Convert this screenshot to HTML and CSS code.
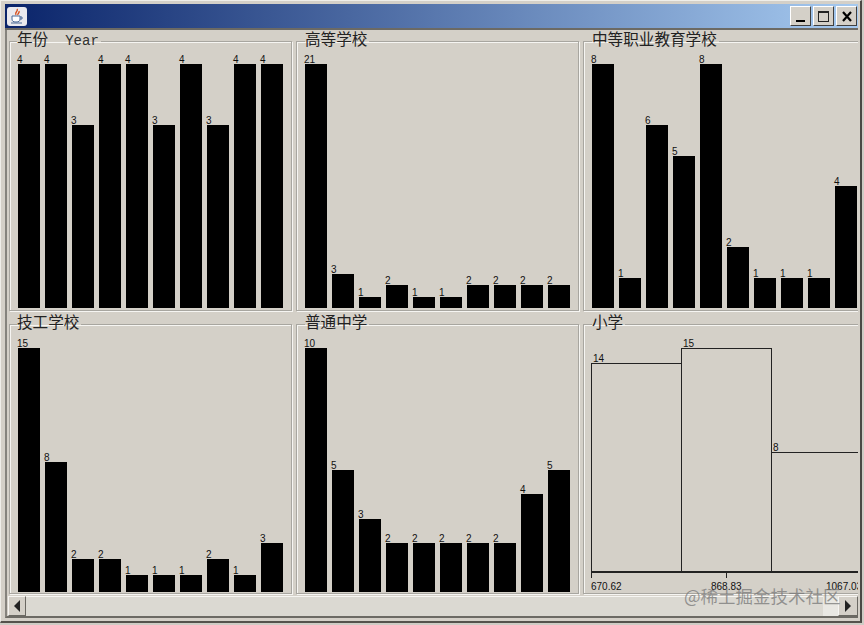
FILE: index.html
```html
<!DOCTYPE html>
<html lang="zh">
<head>
<meta charset="utf-8">
<title>Charts</title>
<link rel="stylesheet" href="styles.css">
</head>
<body>
<div class="window">
  <header class="titlebar">
    <div class="app-icon">
      <svg width="16" height="17" viewBox="0 0 16 17">
        <path d="M8 1c2 2-3 3-1 6M10 3c1 2-2 3-1 4" fill="none" stroke="#d8501c" stroke-width="1.4"/>
        <path d="M3 8h8v3c0 2-1 3-4 3s-4-1-4-3z" fill="#fff" stroke="#4a6a98"/>
        <path d="M11 9h2v2h-2" fill="none" stroke="#4a6a98"/>
        <path d="M2 15h11" stroke="#4a6a98"/>
      </svg>
    </div>
    <div class="win-buttons">
      <button class="win-btn"><span class="min-glyph"></span></button>
      <button class="win-btn"><span class="max-glyph"></span></button>
      <button class="win-btn close-btn">
        <svg width="12" height="11" viewBox="0 0 12 11"><path d="M2 1l8 9M10 1l-8 9" stroke="#000" stroke-width="2.2" fill="none"/></svg>
      </button>
    </div>
  </header>
  <div class="frame">
    <main class="viewport">
      <div class="grid">
        <fieldset class="panel">
          <legend>年份<span class="latin">Year</span></legend>
          <div class="bars">
            <div class="col"><span>4</span><i style="height:244px"></i></div>
            <div class="col"><span>4</span><i style="height:244px"></i></div>
            <div class="col"><span>3</span><i style="height:183px"></i></div>
            <div class="col"><span>4</span><i style="height:244px"></i></div>
            <div class="col"><span>4</span><i style="height:244px"></i></div>
            <div class="col"><span>3</span><i style="height:183px"></i></div>
            <div class="col"><span>4</span><i style="height:244px"></i></div>
            <div class="col"><span>3</span><i style="height:183px"></i></div>
            <div class="col"><span>4</span><i style="height:244px"></i></div>
            <div class="col"><span>4</span><i style="height:244px"></i></div>
          </div>
        </fieldset>
        <fieldset class="panel">
          <legend>高等学校</legend>
          <div class="bars">
            <div class="col"><span>21</span><i style="height:244px"></i></div>
            <div class="col"><span>3</span><i style="height:34px"></i></div>
            <div class="col"><span>1</span><i style="height:11px"></i></div>
            <div class="col"><span>2</span><i style="height:23px"></i></div>
            <div class="col"><span>1</span><i style="height:11px"></i></div>
            <div class="col"><span>1</span><i style="height:11px"></i></div>
            <div class="col"><span>2</span><i style="height:23px"></i></div>
            <div class="col"><span>2</span><i style="height:23px"></i></div>
            <div class="col"><span>2</span><i style="height:23px"></i></div>
            <div class="col"><span>2</span><i style="height:23px"></i></div>
          </div>
        </fieldset>
        <fieldset class="panel">
          <legend>中等职业教育学校</legend>
          <div class="bars">
            <div class="col"><span>8</span><i style="height:244px"></i></div>
            <div class="col"><span>1</span><i style="height:30px"></i></div>
            <div class="col"><span>6</span><i style="height:183px"></i></div>
            <div class="col"><span>5</span><i style="height:152px"></i></div>
            <div class="col"><span>8</span><i style="height:244px"></i></div>
            <div class="col"><span>2</span><i style="height:61px"></i></div>
            <div class="col"><span>1</span><i style="height:30px"></i></div>
            <div class="col"><span>1</span><i style="height:30px"></i></div>
            <div class="col"><span>1</span><i style="height:30px"></i></div>
            <div class="col"><span>4</span><i style="height:122px"></i></div>
          </div>
        </fieldset>
        <fieldset class="panel">
          <legend>技工学校</legend>
          <div class="bars">
            <div class="col"><span>15</span><i style="height:244px"></i></div>
            <div class="col"><span>8</span><i style="height:130px"></i></div>
            <div class="col"><span>2</span><i style="height:33px"></i></div>
            <div class="col"><span>2</span><i style="height:33px"></i></div>
            <div class="col"><span>1</span><i style="height:17px"></i></div>
            <div class="col"><span>1</span><i style="height:17px"></i></div>
            <div class="col"><span>1</span><i style="height:17px"></i></div>
            <div class="col"><span>2</span><i style="height:33px"></i></div>
            <div class="col"><span>1</span><i style="height:17px"></i></div>
            <div class="col"><span>3</span><i style="height:49px"></i></div>
          </div>
        </fieldset>
        <fieldset class="panel">
          <legend>普通中学</legend>
          <div class="bars">
            <div class="col"><span>10</span><i style="height:244px"></i></div>
            <div class="col"><span>5</span><i style="height:122px"></i></div>
            <div class="col"><span>3</span><i style="height:73px"></i></div>
            <div class="col"><span>2</span><i style="height:49px"></i></div>
            <div class="col"><span>2</span><i style="height:49px"></i></div>
            <div class="col"><span>2</span><i style="height:49px"></i></div>
            <div class="col"><span>2</span><i style="height:49px"></i></div>
            <div class="col"><span>2</span><i style="height:49px"></i></div>
            <div class="col"><span>4</span><i style="height:98px"></i></div>
            <div class="col"><span>5</span><i style="height:122px"></i></div>
          </div>
        </fieldset>
        <fieldset class="panel">
          <legend>小学</legend>
          <div class="histogram">
            <div class="hist-bars">
              <div class="hist-col"><span>14</span><i style="height:208px"></i></div>
              <div class="hist-col"><span>15</span><i style="height:223px"></i></div>
              <div class="hist-col"><span>8</span><i style="height:119px"></i></div>
            </div>
            <div class="axis">
              <div class="tick"><b></b><span>670.62</span></div>
              <div class="tick"><b></b><span>868.83</span></div>
              <div class="tick"><b></b><span>1067.03</span></div>
            </div>
          </div>
        </fieldset>
      </div>
    </main>
    <div class="scrollbar">
      <div class="sb-btn"><span class="arrow-left"></span></div>
      <div class="sb-track"></div>
      <div class="sb-thumb"></div>
      <div class="sb-btn"><span class="arrow-right"></span></div>
    </div>
  </div>
</div>
<div class="watermark">@稀土掘金技术社区</div>
</body>
</html>
```

FILE: styles.css
```css
html, body { margin: 0; padding: 0; }
body {
  width: 864px;
  height: 625px;
  overflow: hidden;
  position: relative;
  background: #cfccc5;
  font-family: "Liberation Sans", "Noto Sans CJK SC", sans-serif;
}
.window {
  box-sizing: border-box;
  width: 862px;
  height: 623px;
  padding: 3px 2px 3px 4px;
  background: #d4d0c8;
  border-top: 1px solid #efeee9;
  border-left: 1px solid #efeee9;
  border-right: 2px solid #4a4945;
  border-bottom: 2px solid #55524c;
  display: flex;
  flex-direction: column;
}
.titlebar {
  flex: none;
  box-sizing: border-box;
  height: 26px;
  background: linear-gradient(90deg, #0a246a 0%, #a6caf0 100%);
  display: flex;
  align-items: center;
  justify-content: space-between;
  padding: 0 1px 0 2px;
  border-bottom: 2px solid #6c6a64;
}
.app-icon {
  width: 20px;
  height: 19px;
  background: #e9e9ee;
  border-radius: 3px;
  display: flex;
  align-items: center;
  justify-content: center;
}
.win-buttons { display: flex; gap: 2px; }
.win-btn {
  box-sizing: border-box;
  width: 21px;
  height: 20px;
  padding: 0;
  background: #d4d0c8;
  border: 1px solid;
  border-color: #fff #404040 #404040 #fff;
  display: flex;
  align-items: center;
  justify-content: center;
}
.min-glyph { width: 9px; height: 2px; background: #000; margin-top: 9px; }
.max-glyph { box-sizing: border-box; width: 11px; height: 11px; border: 1px solid #222; border-top-width: 2px; }
.frame {
  flex: 1;
  min-height: 0;
  display: flex;
  flex-direction: column;
  border-left: 2px solid #85837d;
  border-bottom: 2px solid #6c6a64;
}
.viewport {
  flex: 1;
  overflow-x: clip;
  min-height: 0;
}
.grid {
  display: grid;
  grid-template-columns: repeat(3, 283px);
  grid-auto-rows: 280px;
  column-gap: 4px;
  row-gap: 3px;
  width: 860px;
  margin-left: 2px;
  margin-top: 1px;
}
.panel {
  margin: 0;
  padding: 0 0 0 8px;
  min-width: 0;
  box-sizing: border-box;
  border: 1px solid #a8a6a0;
  box-shadow: inset 1px 1px 0 #f6f5f2, 1px 1px 0 #f6f5f2;
  position: relative;
}
.panel:nth-child(n+4) { padding-top: 1px; }
.panel legend {
  margin-left: 0;
  padding: 0 2px 0 0;
  height: 20px;
  font: 15.6px/14px "Noto Sans CJK SC", sans-serif;
  color: #222;
}
.panel:nth-child(3n+1) legend { margin-left: -1px; }
.latin { font: 14px "Liberation Mono", monospace; color: #333; margin-left: 17px; }
.bars {
  display: flex;
  align-items: flex-end;
  gap: 5px;
  height: 256px;
  margin-top: 1px;
}
.col {
  width: 22px;
  flex: none;
  display: flex;
  flex-direction: column;
}
.col span, .hist-col span {
  font-size: 10px;
  line-height: 8px;
  color: #111;
  margin-left: -1px;
}
.col i { display: block; background: #000; }
.histogram { margin-left: -1px; margin-top: 4px; height: 254px; display: flex; flex-direction: column; }
.hist-bars {
  display: flex;
  align-items: flex-end;
  height: 236px;
  width: 300px;
}
.hist-col {
  width: 90px;
  flex: none;
  display: flex;
  flex-direction: column;
}
.hist-col span { margin-left: 2px; }
.hist-col i {
  display: block;
  box-sizing: border-box;
  border: 1px solid #222;
  border-bottom: 0;
  margin-right: -1px;
}
.axis {
  width: 300px;
  border-top: 2px solid #222;
  display: flex;
}
.tick { width: 135px; flex: none; display: flex; flex-direction: column; }
.tick b { width: 1px; height: 5px; background: #222; }
.tick span { font-size: 10px; line-height: 12px; margin-top: 3px; color: #111; }
.tick:nth-child(2) span { margin-left: -15px; }
.tick:nth-child(3) span { margin-left: -35px; }
.scrollbar {
  flex: none;
  box-sizing: border-box;
  height: 20px;
  margin-left: 1px;
  display: flex;
  align-items: stretch;
  background: #dbd9d2;
}
.sb-btn {
  width: 18px;
  flex: none;
  box-sizing: border-box;
  background: #d4d0c8;
  border: 1px solid;
  border-color: #f6f5f2 #6a6862 #6a6862 #f6f5f2;
  display: flex;
  align-items: center;
  justify-content: center;
}
.sb-btn:last-child { width: 20px; }
.sb-track { flex: 1; border-top: 1px solid #f6f5f2; }
.sb-thumb { width: 15px; background: #e9e8e3; }
.arrow-left { border: 6px solid transparent; border-right: 6px solid #222; border-left: 0; }
.arrow-right { border: 6px solid transparent; border-left: 6px solid #222; border-right: 0; }
.watermark {
  position: absolute;
  left: 684px;
  top: 583px;
  font: 17.5px "Noto Sans CJK SC", sans-serif;
  color: rgba(120, 120, 120, 0.75);
  white-space: nowrap;
}
```
